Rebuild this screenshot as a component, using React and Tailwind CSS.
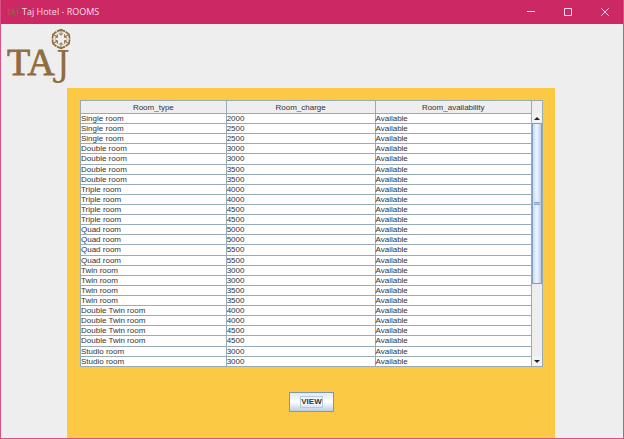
const rooms = [
  ["Single room", 2000],
  ["Single room", 2500],
  ["Single room", 2500],
  ["Double room", 3000],
  ["Double room", 3000],
  ["Double room", 3500],
  ["Double room", 3500],
  ["Triple room", 4000],
  ["Triple room", 4000],
  ["Triple room", 4500],
  ["Triple room", 4500],
  ["Quad room", 5000],
  ["Quad room", 5000],
  ["Quad room", 5500],
  ["Quad room", 5500],
  ["Twin room", 3000],
  ["Twin room", 3000],
  ["Twin room", 3500],
  ["Twin room", 3500],
  ["Double Twin room", 4000],
  ["Double Twin room", 4000],
  ["Double Twin room", 4500],
  ["Double Twin room", 4500],
  ["Studio room", 3000],
  ["Studio room", 3000],
];

const spokes = [0, 60, 120, 180, 240, 300];

function TajLogo({ className }) {
  return (
    <svg viewBox="0 0 68 60" className={className} role="img" aria-label="Taj">
      <g fill="#8f6d3f" stroke="#8f6d3f" strokeWidth="0.8" fontFamily="'Liberation Serif', serif">
        <text x="0" y="47" fontSize="38">TA</text>
        <text x="49" y="48" fontSize="35" fontFamily="'DejaVu Serif', serif" strokeWidth="0">J</text>
      </g>
      <g transform="translate(54 11)" stroke="#8f6d3f" fill="none">
        {spokes.map((a) => (
          <g key={a} transform={`rotate(${a})`}>
            <path d="M-4-7.6L0-9.3L4-7.6" strokeWidth="1.7" />
            <path d="M0-3.6V-8.5" strokeWidth="1" />
            <path d="M-2.4-5.8L0-4L2.4-5.8" strokeWidth="0.8" />
          </g>
        ))}
      </g>
    </svg>
  );
}

function TitleBar() {
  const control = "flex h-full w-[37px] items-center justify-center";
  return (
    <header className="flex h-6 shrink-0 items-center bg-[#cc2864] text-[#fbdde8]">
      <TajLogo className="ml-[6px] h-3 w-[13px] shrink-0" />
      <h1 className="ml-[2px] flex-1 whitespace-nowrap font-['Open_Sans',sans-serif] text-[9px] leading-6">
        Taj Hotel - ROOMS
      </h1>
      <button type="button" aria-label="Minimize" className={control}>
        <svg viewBox="0 0 8 8" className="size-2" stroke="currentColor"><path d="M0 3.5H8" /></svg>
      </button>
      <button type="button" aria-label="Maximize" className={control}>
        <svg viewBox="0 0 8 8" className="size-2" stroke="currentColor" fill="none"><path d="M.5.5H7.5V7.5H.5Z" /></svg>
      </button>
      <button type="button" aria-label="Close" className={control}>
        <svg viewBox="0 0 8 8" className="size-2" stroke="currentColor"><path d="M.3.3L7.7 7.7M7.7.3L.3 7.7" /></svg>
      </button>
    </header>
  );
}

function ScrollBar() {
  const arrow = "flex h-[10px] w-full shrink-0 items-center justify-center bg-[#f3f3f3]";
  return (
    <div className="flex w-[10px] shrink-0 flex-col border-b border-[#9aabb8] bg-[#eeeeee]">
      <div className="h-[12px] shrink-0 bg-[#eeeeee]" />
      <button type="button" aria-label="Scroll up" className={arrow}>
        <svg viewBox="0 0 6 3" className="h-[3px] w-[6px]" fill="#222"><path d="M0 3L3 0L6 3Z" /></svg>
      </button>
      <div className="flex-1">
        <div className="flex h-[69%] flex-col items-center justify-center border border-[#7f9cc9] bg-linear-to-r from-[#c9dcf1] via-[#eff6ff] to-[#b9cfe9]">
          <span className="h-[3px] w-[6px] border-y border-[#8ba6d2] bg-[#b4c8e6]" />
        </div>
      </div>
      <button type="button" aria-label="Scroll down" className={arrow}>
        <svg viewBox="0 0 6 3" className="h-[3px] w-[6px]" fill="#222"><path d="M0 0L3 3L6 0Z" /></svg>
      </button>
    </div>
  );
}

function RoomsTable() {
  const head = "h-[13px] border-r border-b border-[#9aabb8] p-0 text-center font-normal";
  const cell = "border-r border-b border-[#9aabb8] p-0";
  return (
    <div className="flex border border-b-0 border-[#9aabb8] bg-white">
      <table className="h-[266px] flex-1 table-fixed border-separate border-spacing-0 font-['Liberation_Sans',Arial,sans-serif] text-[8px] leading-[9px] text-[#333]">
        <colgroup>
          <col className="w-[32.3%]" />
          <col className="w-[33%]" />
          <col />
        </colgroup>
        <thead className="bg-[#eeeeee]">
          <tr>
            <th scope="col" className={head}>Room_type</th>
            <th scope="col" className={head}>Room_charge</th>
            <th scope="col" className={head}>Room_availability</th>
          </tr>
        </thead>
        <tbody>
          {rooms.map(([type, charge], i) => (
            <tr key={i}>
              <td className={cell}>{type}</td>
              <td className={cell}>{charge}</td>
              <td className={cell}>Available</td>
            </tr>
          ))}
        </tbody>
      </table>
      <ScrollBar />
    </div>
  );
}

export default function App() {
  return (
    <div className="flex min-h-screen flex-col border border-t-0 border-[#d95084] bg-[#eeeeee]">
      <TitleBar />
      <div className="h-16 shrink-0 pt-1 pl-[6px]">
        <TajLogo className="h-[60px] w-[68px]" />
      </div>
      <main className="mr-[68px] ml-[66px] flex flex-1 flex-col bg-[#fbc944] pt-3 pr-3 pl-[13px]">
        <RoomsTable />
        <button
          type="button"
          className="mt-[25px] flex h-5 w-[45px] items-center justify-center self-center border border-[#8296ad] bg-linear-to-b from-[#dfe9f4] via-[#ffffff] to-[#b9cee4] font-['Liberation_Sans',Arial,sans-serif] text-[8px] font-bold text-[#333]"
        >
          <span className="border border-[#b5c9df] leading-[10px]">VIEW</span>
        </button>
      </main>
    </div>
  );
}
